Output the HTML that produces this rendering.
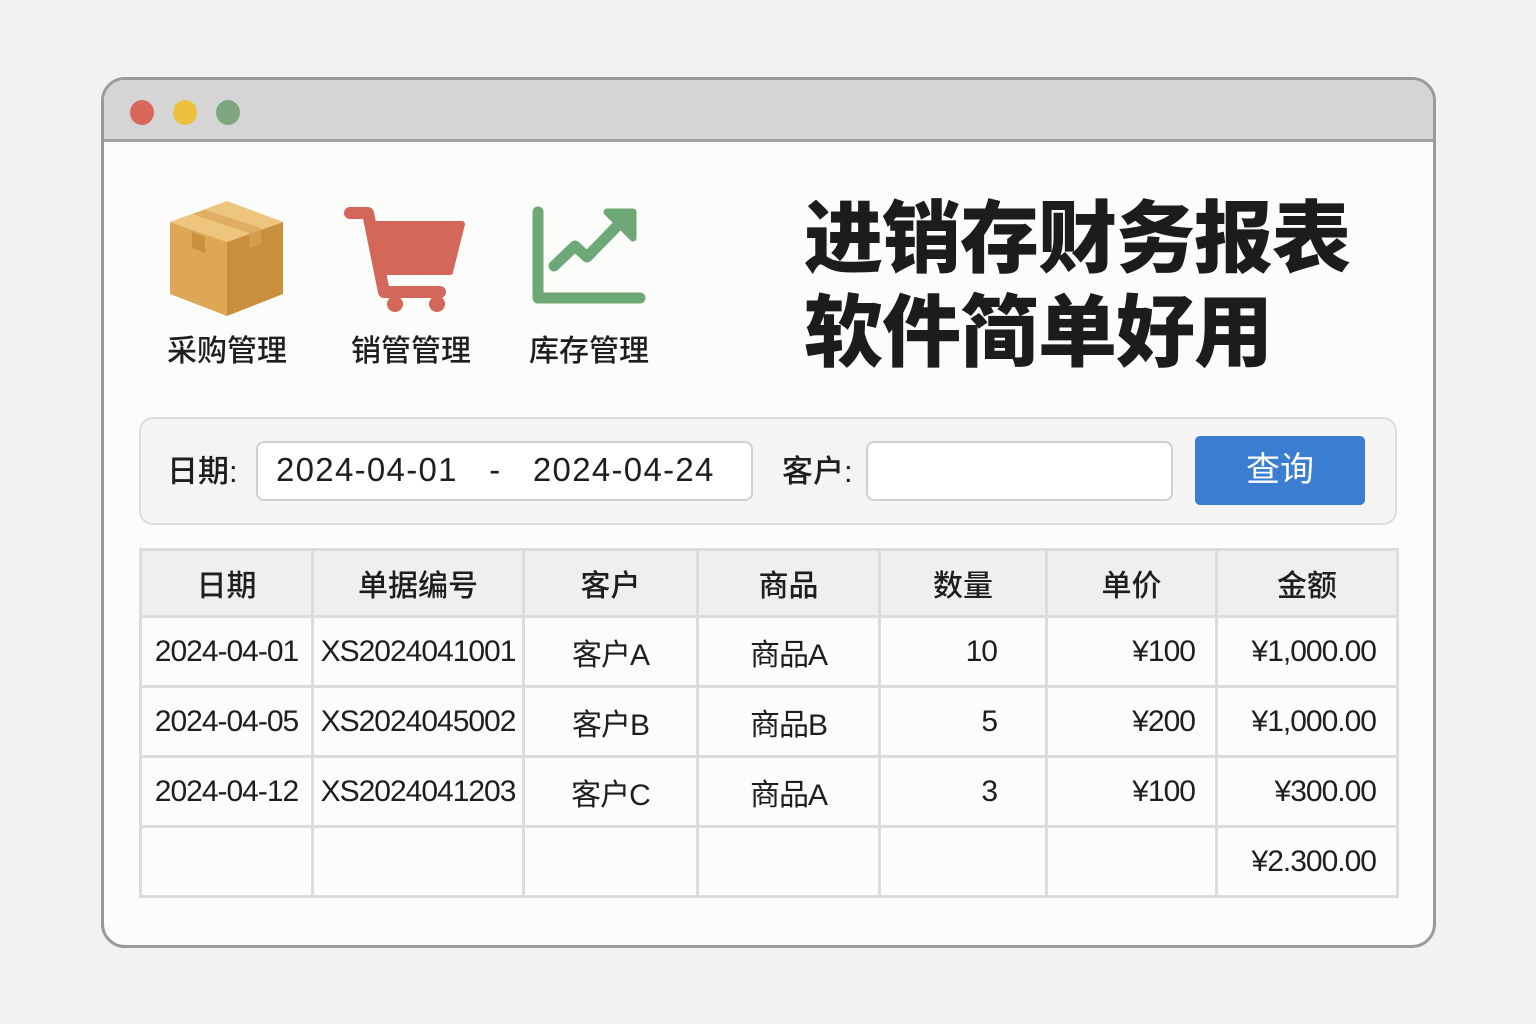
<!DOCTYPE html>
<html><head><meta charset="utf-8"><style>
*{box-sizing:border-box;margin:0;padding:0}
body{width:1536px;height:1024px;background:#f2f2f0;position:relative;font-family:"Liberation Sans","Noto Sans CJK SC",sans-serif;color:#1e1e1e;overflow:hidden}
.win{position:absolute;left:101px;top:77px;width:1335px;height:871px;border:3px solid #9a9a9a;border-radius:24px;background:#fcfcfa;overflow:hidden}
.bar{position:absolute;left:0;top:0;width:100%;height:62px;background:#d5d5d5;border-bottom:3px solid #a0a0a0}
.dot{position:absolute;top:20px;width:24px;height:25px;border-radius:50%}
.a{position:absolute}
.lbl{position:absolute;font-size:30px;font-weight:500;white-space:nowrap}
.title{position:absolute;left:804px;font-size:79px;font-weight:900;letter-spacing:-1px;white-space:nowrap;color:#1c1c1c}
.panel{position:absolute;left:139px;top:417px;width:1258px;height:108px;border:2px solid #dcdcda;border-radius:14px;background:#f4f4f2}
.box{position:absolute;border:2px solid #cfcfcd;border-radius:8px;background:#fff}
table{position:absolute;left:139px;top:548px;border-collapse:collapse;font-size:30px}
td{border:3px solid #dcdcda;text-align:center;height:70px;padding:0 10px;white-space:nowrap;letter-spacing:-1px}
tr.h td{background:#efefed;height:67px;font-weight:500;letter-spacing:0}
td.r{text-align:right;padding-right:20px}
</style></head><body>
<div class="win">
<div class="bar">
<div class="dot" style="left:26px;background:#d9665a"></div>
<div class="dot" style="left:69px;background:#ecbf3f"></div>
<div class="dot" style="left:112px;background:#7ea77f"></div>
</div>
</div>
<svg class="a" style="left:165px;top:198px" width="125" height="120" viewBox="0 0 125 120">
<polygon points="5,24 62,3 118,24 62,44" fill="#eec57c"/>
<polygon points="5,24 62,44 62,118 5,96" fill="#dea755"/>
<polygon points="62,44 118,24 118,96 62,118" fill="#c98f3f"/>
<polygon points="27,16 84,35 84,50 96,46 96,30 40,12" fill="#d8a458" opacity=".7"/>
<polygon points="27,34 40,39 40,55 27,50" fill="#c8903f"/>
</svg>
<svg class="a" style="left:340px;top:200px" width="130" height="120" viewBox="0 0 130 120">
<path d="M10,13 H28 L44,92 H100" fill="none" stroke="#d4675a" stroke-width="12" stroke-linecap="round" stroke-linejoin="round"/>
<path d="M29,24 H122 L110,72 H40 Z" fill="#d4675a" stroke="#d4675a" stroke-width="6" stroke-linejoin="round"/>
<circle cx="55" cy="104" r="8" fill="#d4675a"/><circle cx="97" cy="104" r="8" fill="#d4675a"/>
</svg>
<svg class="a" style="left:525px;top:200px" width="130" height="112" viewBox="0 0 130 112">
<path d="M13,12 V98 H115" fill="none" stroke="#6ea877" stroke-width="11" stroke-linecap="round" stroke-linejoin="round"/>
<path d="M29,66 L50,46 L62,57 L100,18" fill="none" stroke="#6ea877" stroke-width="11" stroke-linecap="round" stroke-linejoin="round"/>
<path d="M82,12 H108 V38 Z" fill="#6ea877" stroke="#6ea877" stroke-width="7" stroke-linejoin="round"/>
</svg>
<div class="lbl" style="left:167px;top:326px">采购管理</div>
<div class="lbl" style="left:351px;top:326px">销管管理</div>
<div class="lbl" style="left:529px;top:326px">库存管理</div>
<div class="title" style="top:174px">进销存财务报表</div>
<div class="title" style="top:268px">软件简单好用</div>
<div class="panel"></div>
<div class="lbl" style="left:167px;top:446px;font-size:31px">日期:</div>
<div class="box" style="left:256px;top:441px;width:497px;height:60px"></div>
<div class="lbl" style="left:276px;top:451px;font-size:33px;letter-spacing:1.3px">2024-04-01 &nbsp;&nbsp;- &nbsp;&nbsp;2024-04-24</div>
<div class="lbl" style="left:782px;top:446px;font-size:31px">客户:</div>
<div class="box" style="left:866px;top:441px;width:307px;height:60px"></div>
<div class="a" style="left:1195px;top:436px;width:170px;height:69px;background:#3b7dd0;border-radius:5px;color:#fff;font-size:34px;text-align:center;line-height:69px">查询</div>
<table>
<colgroup><col style="width:172px"><col style="width:211px"><col style="width:174px"><col style="width:182px"><col style="width:167px"><col style="width:170px"><col style="width:181px"></colgroup>
<tr class="h"><td>日期</td><td>单据编号</td><td>客户</td><td>商品</td><td>数量</td><td>单价</td><td>金额</td></tr>
<tr><td style="padding:0">2024-04-01</td><td style="padding:0">XS2024041001</td><td>客户A</td><td>商品A</td><td class="r" style="padding-right:48px">10</td><td class="r">¥100</td><td class="r">¥1,000.00</td></tr>
<tr><td style="padding:0">2024-04-05</td><td style="padding:0">XS2024045002</td><td>客户B</td><td>商品B</td><td class="r" style="padding-right:48px">5</td><td class="r">¥200</td><td class="r">¥1,000.00</td></tr>
<tr><td style="padding:0">2024-04-12</td><td style="padding:0">XS2024041203</td><td>客户C</td><td>商品A</td><td class="r" style="padding-right:48px">3</td><td class="r">¥100</td><td class="r">¥300.00</td></tr>
<tr><td></td><td></td><td></td><td></td><td></td><td></td><td class="r">¥2.300.00</td></tr>
</table>
</body></html>
